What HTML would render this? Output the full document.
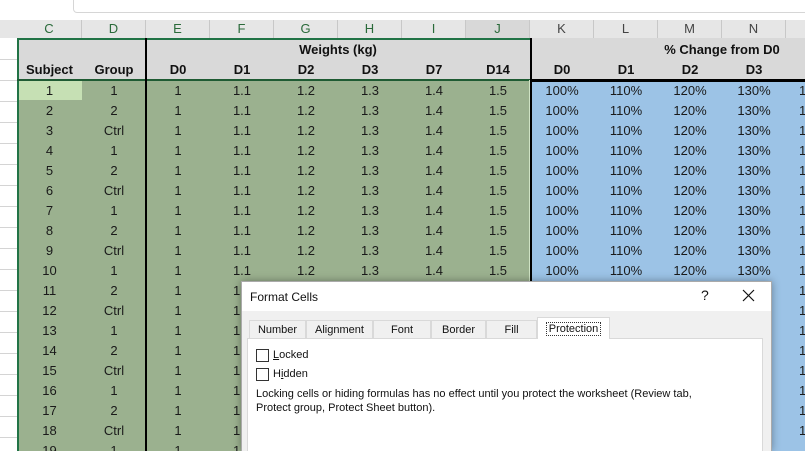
<!DOCTYPE html>
<html style="overflow:hidden;width:805px;height:451px"><head><style>
*{margin:0;padding:0;box-sizing:border-box}
body{width:805px;height:451px;overflow:hidden;background:#fff;font-family:"Liberation Sans",sans-serif;position:relative}
.a{position:absolute}
table{position:absolute;left:17px;top:80px;width:799px;border-collapse:collapse;table-layout:fixed;font-size:13px;color:#1a1a1a}
td{height:20px;text-align:center;padding:0;white-space:nowrap;overflow:hidden}
td.g{background:#9bb18f}
td.b{background:#9cc3e6}
td.o{text-align:left;padding-left:13px}
.ch{position:absolute;top:20px;height:18px;font-size:13px;color:#2a6a3a;text-align:center;line-height:18px;border-right:1px solid #c8c8c8;background:#e6e6e6}
.hd{position:absolute;font-weight:bold;font-size:13px;text-align:center;color:#111}
.tab{position:absolute;top:320px;height:18px;font-size:11px;line-height:18px;text-align:center;border:1px solid #d9d9d9;border-bottom:none;background:#f0f0f0;color:#111}
</style></head><body>
<div class="a" style="left:73px;top:0;width:740px;height:13px;border:1px solid #d6d6d6;border-top:none;border-radius:0 0 0 4px"></div>
<div class="a" style="left:0;top:20px;width:17px;height:18px;background:#e6e6e6"></div>
<div class="ch" style="left:17px;width:65px">C</div>
<div class="ch" style="left:82px;width:64px">D</div>
<div class="ch" style="left:146px;width:64px">E</div>
<div class="ch" style="left:210px;width:64px">F</div>
<div class="ch" style="left:274px;width:64px">G</div>
<div class="ch" style="left:338px;width:64px">H</div>
<div class="ch" style="left:402px;width:64px">I</div>
<div class="ch" style="left:466px;width:64px;background:#d8d8d8">J</div>
<div class="ch" style="left:530px;width:64px;color:#444">K</div>
<div class="ch" style="left:594px;width:64px;color:#444">L</div>
<div class="ch" style="left:658px;width:64px;color:#444">M</div>
<div class="ch" style="left:722px;width:64px;color:#444">N</div>
<div class="ch" style="left:786px;width:30px"></div>
<div class="a" style="left:0;top:39px;width:17px;height:412px;background:repeating-linear-gradient(to bottom,transparent 0,transparent 20px,#d4d4d4 20px,#d4d4d4 21px)"></div>
<div class="a" style="left:17px;top:38px;width:788px;height:42px;background:#d9d9d9"></div>
<div class="hd" style="left:146px;top:42px;width:384px">Weights (kg)</div>
<div class="hd" style="left:530px;top:42px;width:384px">% Change from D0</div>
<div class="hd" style="left:17px;top:62px;width:65px">Subject</div>
<div class="hd" style="left:82px;top:62px;width:64px">Group</div>
<div class="hd" style="left:146px;top:62px;width:64px">D0</div>
<div class="hd" style="left:210px;top:62px;width:64px">D1</div>
<div class="hd" style="left:274px;top:62px;width:64px">D2</div>
<div class="hd" style="left:338px;top:62px;width:64px">D3</div>
<div class="hd" style="left:402px;top:62px;width:64px">D7</div>
<div class="hd" style="left:466px;top:62px;width:64px">D14</div>
<div class="hd" style="left:530px;top:62px;width:64px">D0</div>
<div class="hd" style="left:594px;top:62px;width:64px">D1</div>
<div class="hd" style="left:658px;top:62px;width:64px">D2</div>
<div class="hd" style="left:722px;top:62px;width:64px">D3</div>
<table>
<colgroup><col style="width:65px"><col style="width:64px"><col style="width:64px"><col style="width:64px"><col style="width:64px"><col style="width:64px"><col style="width:64px"><col style="width:64px"><col style="width:64px"><col style="width:64px"><col style="width:64px"><col style="width:64px"><col style="width:30px"></colgroup>
<tr><td class="g" style="background:#c6e0b4">1</td><td class="g">1</td><td class="g">1</td><td class="g">1.1</td><td class="g">1.2</td><td class="g">1.3</td><td class="g">1.4</td><td class="g">1.5</td><td class="b">100%</td><td class="b">110%</td><td class="b">120%</td><td class="b">130%</td><td class="b o">1</td></tr>
<tr><td class="g">2</td><td class="g">2</td><td class="g">1</td><td class="g">1.1</td><td class="g">1.2</td><td class="g">1.3</td><td class="g">1.4</td><td class="g">1.5</td><td class="b">100%</td><td class="b">110%</td><td class="b">120%</td><td class="b">130%</td><td class="b o">1</td></tr>
<tr><td class="g">3</td><td class="g">Ctrl</td><td class="g">1</td><td class="g">1.1</td><td class="g">1.2</td><td class="g">1.3</td><td class="g">1.4</td><td class="g">1.5</td><td class="b">100%</td><td class="b">110%</td><td class="b">120%</td><td class="b">130%</td><td class="b o">1</td></tr>
<tr><td class="g">4</td><td class="g">1</td><td class="g">1</td><td class="g">1.1</td><td class="g">1.2</td><td class="g">1.3</td><td class="g">1.4</td><td class="g">1.5</td><td class="b">100%</td><td class="b">110%</td><td class="b">120%</td><td class="b">130%</td><td class="b o">1</td></tr>
<tr><td class="g">5</td><td class="g">2</td><td class="g">1</td><td class="g">1.1</td><td class="g">1.2</td><td class="g">1.3</td><td class="g">1.4</td><td class="g">1.5</td><td class="b">100%</td><td class="b">110%</td><td class="b">120%</td><td class="b">130%</td><td class="b o">1</td></tr>
<tr><td class="g">6</td><td class="g">Ctrl</td><td class="g">1</td><td class="g">1.1</td><td class="g">1.2</td><td class="g">1.3</td><td class="g">1.4</td><td class="g">1.5</td><td class="b">100%</td><td class="b">110%</td><td class="b">120%</td><td class="b">130%</td><td class="b o">1</td></tr>
<tr><td class="g">7</td><td class="g">1</td><td class="g">1</td><td class="g">1.1</td><td class="g">1.2</td><td class="g">1.3</td><td class="g">1.4</td><td class="g">1.5</td><td class="b">100%</td><td class="b">110%</td><td class="b">120%</td><td class="b">130%</td><td class="b o">1</td></tr>
<tr><td class="g">8</td><td class="g">2</td><td class="g">1</td><td class="g">1.1</td><td class="g">1.2</td><td class="g">1.3</td><td class="g">1.4</td><td class="g">1.5</td><td class="b">100%</td><td class="b">110%</td><td class="b">120%</td><td class="b">130%</td><td class="b o">1</td></tr>
<tr><td class="g">9</td><td class="g">Ctrl</td><td class="g">1</td><td class="g">1.1</td><td class="g">1.2</td><td class="g">1.3</td><td class="g">1.4</td><td class="g">1.5</td><td class="b">100%</td><td class="b">110%</td><td class="b">120%</td><td class="b">130%</td><td class="b o">1</td></tr>
<tr><td class="g">10</td><td class="g">1</td><td class="g">1</td><td class="g">1.1</td><td class="g">1.2</td><td class="g">1.3</td><td class="g">1.4</td><td class="g">1.5</td><td class="b">100%</td><td class="b">110%</td><td class="b">120%</td><td class="b">130%</td><td class="b o">1</td></tr>
<tr><td class="g">11</td><td class="g">2</td><td class="g">1</td><td class="g">1.1</td><td class="g">1.2</td><td class="g">1.3</td><td class="g">1.4</td><td class="g">1.5</td><td class="b">100%</td><td class="b">110%</td><td class="b">120%</td><td class="b">130%</td><td class="b o">1</td></tr>
<tr><td class="g">12</td><td class="g">Ctrl</td><td class="g">1</td><td class="g">1.1</td><td class="g"></td><td class="g"></td><td class="g"></td><td class="g"></td><td class="b"></td><td class="b"></td><td class="b"></td><td class="b"></td><td class="b o">1</td></tr>
<tr><td class="g">13</td><td class="g">1</td><td class="g">1</td><td class="g">1.1</td><td class="g"></td><td class="g"></td><td class="g"></td><td class="g"></td><td class="b"></td><td class="b"></td><td class="b"></td><td class="b"></td><td class="b o">1</td></tr>
<tr><td class="g">14</td><td class="g">2</td><td class="g">1</td><td class="g">1.1</td><td class="g"></td><td class="g"></td><td class="g"></td><td class="g"></td><td class="b"></td><td class="b"></td><td class="b"></td><td class="b"></td><td class="b o">1</td></tr>
<tr><td class="g">15</td><td class="g">Ctrl</td><td class="g">1</td><td class="g">1.1</td><td class="g"></td><td class="g"></td><td class="g"></td><td class="g"></td><td class="b"></td><td class="b"></td><td class="b"></td><td class="b"></td><td class="b o">1</td></tr>
<tr><td class="g">16</td><td class="g">1</td><td class="g">1</td><td class="g">1.1</td><td class="g"></td><td class="g"></td><td class="g"></td><td class="g"></td><td class="b"></td><td class="b"></td><td class="b"></td><td class="b"></td><td class="b o">1</td></tr>
<tr><td class="g">17</td><td class="g">2</td><td class="g">1</td><td class="g">1.1</td><td class="g"></td><td class="g"></td><td class="g"></td><td class="g"></td><td class="b"></td><td class="b"></td><td class="b"></td><td class="b"></td><td class="b o">1</td></tr>
<tr><td class="g">18</td><td class="g">Ctrl</td><td class="g">1</td><td class="g">1.1</td><td class="g"></td><td class="g"></td><td class="g"></td><td class="g"></td><td class="b"></td><td class="b"></td><td class="b"></td><td class="b"></td><td class="b o">1</td></tr>
<tr><td class="g">19</td><td class="g">1</td><td class="g">1</td><td class="g">1.1</td><td class="g"></td><td class="g"></td><td class="g"></td><td class="g"></td><td class="b"></td><td class="b"></td><td class="b"></td><td class="b"></td><td class="b"></td></tr>
</table>
<div class="a" style="left:17px;top:38px;width:513px;height:2px;background:#217346"></div>
<div class="a" style="left:17px;top:38px;width:2px;height:413px;background:#217346"></div>
<div class="a" style="left:17px;top:79px;width:788px;height:2px;background:#1f5b33"></div>
<div class="a" style="left:529px;top:80px;width:1px;height:371px;background:#cfe3c4"></div>
<div class="a" style="left:145px;top:38px;width:2px;height:413px;background:#000"></div>
<div class="a" style="left:530px;top:38px;width:2px;height:413px;background:#000"></div>
<div class="a" style="left:530px;top:79px;width:275px;height:3px;background:#000"></div>
<div class="a" style="left:241px;top:281px;width:531px;height:170px;background:#f0f0f0;border:1px solid #aaa;border-bottom:none;box-shadow:0 0 8px rgba(0,0,0,.35)">
<div class="a" style="left:0;top:0;width:529px;height:29px;background:#fff"></div>
<div class="a" style="left:8px;top:8px;font-size:12px;color:#111">Format Cells</div>
<div class="a" style="left:459px;top:5px;font-size:14px;color:#111">?</div>
<svg class="a" style="left:500px;top:7px" width="13" height="13"><path d="M1 1L12 12M12 1L1 12" stroke="#111" stroke-width="1.2"/></svg>
</div>
<div class="tab" style="left:249px;width:57px">Number</div>
<div class="tab" style="left:306px;width:67px">Alignment</div>
<div class="tab" style="left:373px;width:58px">Font</div>
<div class="tab" style="left:431px;width:55px">Border</div>
<div class="tab" style="left:486px;width:51px">Fill</div>
<div class="a" style="left:247px;top:338px;width:516px;height:113px;background:#fff;border:1px solid #d9d9d9;border-bottom:none"></div>
<div class="tab" style="left:537px;top:317px;height:22px;width:73px;background:#fff;line-height:22px"><span style="outline:1px dotted #333;padding:0 2px">Protection</span></div>
<div class="a" style="left:256px;top:349px;width:13px;height:13px;border:1px solid #333;background:#fff"></div>
<div class="a" style="left:273px;top:349px;font-size:11px;color:#111"><u>L</u>ocked</div>
<div class="a" style="left:256px;top:368px;width:13px;height:13px;border:1px solid #333;background:#fff"></div>
<div class="a" style="left:273px;top:368px;font-size:11px;color:#111">H<u>i</u>dden</div>
<div class="a" style="left:256px;top:387px;font-size:11px;color:#111;line-height:14px;width:500px">Locking cells or hiding formulas has no effect until you protect the worksheet (Review tab,<br>Protect group, Protect Sheet button).</div>
</body></html>
